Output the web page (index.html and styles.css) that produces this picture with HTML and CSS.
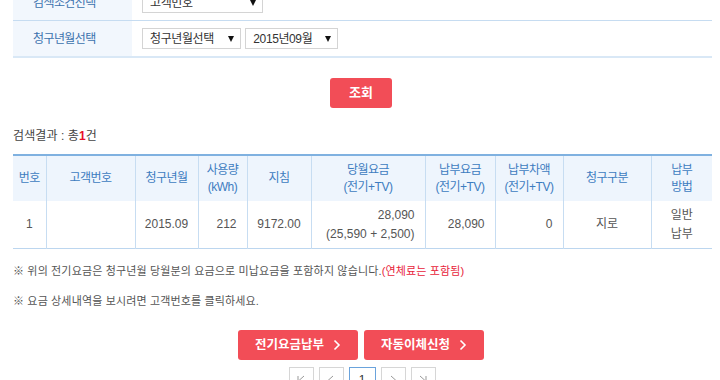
FILE: index.html
```html
<!DOCTYPE html>
<html>
	<head>
		<meta charset="UTF-8">
		<title>전기요금 조회</title>
		<link rel="stylesheet" href="styles.css">
	</head>
	<body>
		<div class="page">
			<table class="search">
				<tr>
					<th>검색조건선택</th>
					<td><span class="sel sel-cust">고객번호<i></i></span></td>
				</tr>
				<tr>
					<th>청구년월선택</th>
					<td>
						<span class="sel sel-type">청구년월선택<i></i></span>
						<span class="sel sel-month">2015년09월<i></i></span>
					</td>
				</tr>
			</table>

			<div class="btnWrap">
				<a href="javascript:;" class="btn-search">조회</a>
			</div>

			<p class="result">검색결과 : 총<b>1</b>건</p>

			<table class="bill">
				<colgroup>
					<col style="width:33px"><col style="width:89px"><col style="width:63px"><col style="width:49px"><col style="width:64px">
					<col style="width:114px"><col style="width:70px"><col style="width:68px"><col style="width:88px"><col style="width:61px">
				</colgroup>
				<thead>
					<tr>
						<th>번호</th>
						<th>고객번호</th>
						<th>청구년월</th>
						<th>사용량<br>(kWh)</th>
						<th>지침</th>
						<th>당월요금<br>(전기+TV)</th>
						<th>납부요금<br>(전기+TV)</th>
						<th>납부차액<br>(전기+TV)</th>
						<th>청구구분</th>
						<th>납부<br>방법</th>
					</tr>
				</thead>
				<tbody>
					<tr>
						<td class="c">1</td>
						<td class="c"></td>
						<td class="c">2015.09</td>
						<td class="r">212</td>
						<td class="c">9172.00</td>
						<td class="r">28,090<br>(25,590 + 2,500)</td>
						<td class="r">28,090</td>
						<td class="r">0</td>
						<td class="c">지로</td>
						<td class="c">일반<br>납부</td>
					</tr>
				</tbody>
			</table>

			<p class="note">※ 위의 전기요금은 청구년월 당월분의 요금으로 미납요금을 포함하지 않습니다.<em>(연체료는 포함됨)</em></p>
			<p class="note">※ 요금 상세내역을 보시려면 고객번호를 클릭하세요.</p>

			<div class="actions">
				<a href="javascript:;" class="btn-red">전기요금납부<svg width="8" height="12" viewBox="0 0 8 12"><polyline points="1.5,1.5 6,6 1.5,10.5" fill="none" stroke="#fff" stroke-width="1.6"/></svg></a>
				<a href="javascript:;" class="btn-red">자동이체신청<svg width="8" height="12" viewBox="0 0 8 12"><polyline points="1.5,1.5 6,6 1.5,10.5" fill="none" stroke="#fff" stroke-width="1.6"/></svg></a>
			</div>

			<div class="paging">
				<a href="javascript:;"><svg width="12" height="12" viewBox="0 0 12 12"><line x1="3" y1="2" x2="3" y2="10" stroke="#999"/><polyline points="9,2 4.5,6 9,10" fill="none" stroke="#999"/></svg></a>
				<a href="javascript:;"><svg width="12" height="12" viewBox="0 0 12 12"><polyline points="8,2 3.5,6 8,10" fill="none" stroke="#999"/></svg></a>
				<a href="javascript:;" class="on">1</a>
				<a href="javascript:;"><svg width="12" height="12" viewBox="0 0 12 12"><polyline points="4,2 8.5,6 4,10" fill="none" stroke="#999"/></svg></a>
				<a href="javascript:;"><svg width="12" height="12" viewBox="0 0 12 12"><polyline points="3,2 7.5,6 3,10" fill="none" stroke="#999"/><line x1="9" y1="2" x2="9" y2="10" stroke="#999"/></svg></a>
			</div>
		</div>
	</body>
</html>
```

FILE: styles.css
```css
html,body{
	margin: 0;
	padding: 0;
	background: #fff;
	overflow: hidden;
}
body{
	font: 12px/16px "Liberation Sans", "Noto Sans CJK KR", sans-serif;
	color: #555;
}
a{
	text-decoration: none;
}
p{
	margin: 0;
}
.page{
	width: 699px;
	margin: -15px 8px 0 13px;
}

/* search form */
.search{
	width: 100%;
	border-collapse: collapse;
	border-bottom: 2px solid #d9e8f6;
}
.search tr + tr{
	border-top: 1px solid #c6dcf1;
}
.search th{
	width: 99px;
	height: 35px;
	padding: 0 0 0 20px;
	text-align: left;
	font-weight: normal;
	color: #3b72ad;
	background: #f2f7fd;
	letter-spacing: -0.6px;
}
.search td{
	padding: 0 0 0 10px;
	height: 35px;
}
.sel{
	display: inline-flex;
	align-items: center;
	justify-content: space-between;
	box-sizing: border-box;
	height: 21px;
	padding: 0 6px 0 7px;
	border: 1px solid #d4d4d4;
	color: #333;
	vertical-align: middle;
	letter-spacing: -0.4px;
}
.sel i{
	width: 0;
	height: 0;
	border-left: 3.5px solid transparent;
	border-right: 3.5px solid transparent;
	border-top: 6px solid #111;
}
.sel-cust{
	width: 121px;
}
.sel-type{
	width: 99px;
}
.sel-month{
	width: 93px;
	margin-left: 1px;
}

/* button */
.btnWrap{
	display: flex;
	justify-content: center;
	margin-top: 20px;
}
.btn-search{
	width: 62px;
	height: 30px;
	line-height: 30px;
	margin-left: -3px;
	text-align: center;
	border-radius: 3px;
	background: #f24d57;
	color: #fff;
	font-weight: bold;
	font-size: 13px;
}

.result{
	margin-top: 20px;
	color: #444;
	letter-spacing: 0.1px;
}
.result b{
	color: #e8102a;
}

/* bill table */
.bill{
	width: 699px;
	margin-top: 10px;
	table-layout: fixed;
	border-collapse: collapse;
	border-top: 2px solid #7fb1e0;
	border-bottom: 1px solid #bcd6ef;
}
.bill th,.bill td{
	border-left: 1px solid #c7ddf2;
	padding: 0;
}
.bill th:first-child,.bill td:first-child{
	border-left: 0;
}
.bill th{
	height: 45px;
	background: #eef5fd;
	color: #3d7cc0;
	font-weight: normal;
	line-height: 17px;
	letter-spacing: -0.5px;
}
.bill td{
	height: 47px;
	line-height: 19px;
	color: #555;
}
.bill .c{
	text-align: center;
}
.bill .r{
	text-align: right;
	padding-right: 10px;
}

.note{
	margin-top: 14px;
	font-size: 11px;
	color: #555;
	letter-spacing: 0.15px;
}
.note + .note{
	margin-top: 14px;
}
.note em{
	font-style: normal;
	color: #e8233a;
}

.actions{
	display: flex;
	justify-content: center;
	gap: 6px;
	margin: 21px 0 0 -3px;
}
.btn-red{
	display: flex;
	align-items: center;
	justify-content: center;
	gap: 9px;
	width: 120px;
	height: 30px;
	border-radius: 3px;
	background: #f24d57;
	color: #fff;
	font-weight: bold;
	font-size: 12.5px;
}

.paging{
	display: flex;
	justify-content: center;
	gap: 5px;
	margin: 7px 0 0 -1px;
}
.paging a{
	display: flex;
	align-items: center;
	justify-content: center;
	box-sizing: border-box;
	width: 25px;
	height: 25px;
	border: 1px solid #d6d6d6;
	color: #333;
}
.paging a.on{
	width: 27px;
	border-color: #6aa3dc;
}
```
